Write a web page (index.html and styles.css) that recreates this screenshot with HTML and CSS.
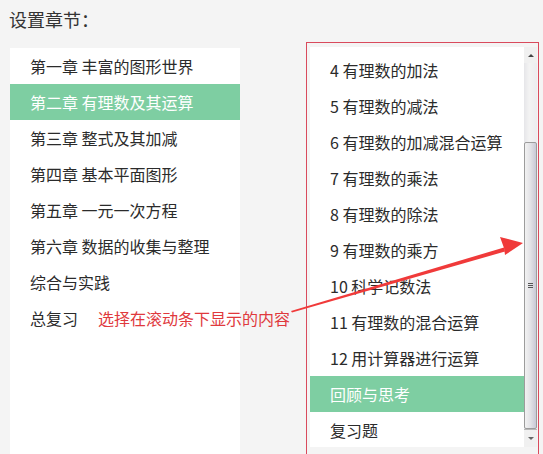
FILE: index.html
```html
<!DOCTYPE html>
<html lang="zh">
<head>
<meta charset="utf-8">
<link rel="stylesheet" href="styles.css">
</head>
<body>
<div class="page">
  <div class="title">设置章节：</div>
  <div class="main">
    <ul class="chapters">
      <li>第一章 丰富的图形世界</li>
      <li class="active">第二章 有理数及其运算</li>
      <li>第三章 整式及其加减</li>
      <li>第四章 基本平面图形</li>
      <li>第五章 一元一次方程</li>
      <li>第六章 数据的收集与整理</li>
      <li>综合与实践</li>
      <li>总复习</li>
    </ul>
    <div class="frame">
      <div class="listbox">
        <ul class="sections">
          <li>4 有理数的加法</li>
          <li>5 有理数的减法</li>
          <li>6 有理数的加减混合运算</li>
          <li>7 有理数的乘法</li>
          <li>8 有理数的除法</li>
          <li>9 有理数的乘方</li>
          <li>10 科学记数法</li>
          <li>11 有理数的混合运算</li>
          <li>12 用计算器进行运算</li>
          <li class="active">回顾与思考</li>
          <li>复习题</li>
        </ul>
        <div class="scrollbar">
          <div class="sb-btn sb-up"><span class="tri-up"></span></div>
          <div class="sb-track">
            <div class="sb-thumb"><span class="grip"></span></div>
          </div>
          <div class="sb-btn sb-down"><span class="tri-down"></span></div>
        </div>
      </div>
    </div>
  </div>
  <div class="note">选择在滚动条下显示的内容</div>
  <svg class="arrow" width="543" height="454" viewBox="0 0 543 454">
    <polygon points="291,311 504,247.5 505,251.5 292,312.5" fill="#f03a3a"/>
    <polygon points="523,243 500,237 504,248 505,255" fill="#f03a3a"/>
  </svg>
</div>
</body>
</html>
```
FILE: styles.css
```css
html, body {
  margin: 0;
  padding: 0;
  background: #f4f4f4;
  overflow: hidden;
}
body {
  font-family: "Noto Sans CJK SC", "Noto Sans", sans-serif;
  color: #2b2b2b;
}
.page {
  position: relative;
  width: 543px;
  height: 454px;
  overflow: hidden;
}
.title {
  font-size: 18px;
  line-height: 22px;
  padding: 8px 0 0 9px;
  height: 40px;
  box-sizing: border-box;
  color: #333;
}
.main {
  display: flex;
  align-items: flex-start;
}
ul {
  list-style: none;
  margin: 0;
  padding: 0;
}
.chapters {
  margin: 8px 0 0 10px;
  width: 230px;
  height: 420px;
  background: #fff;
}
.chapters li,
.sections li {
  height: 36px;
  line-height: 36px;
  font-size: 16px;
  padding-left: 20px;
  white-space: nowrap;
}
.active {
  background: #7ecea2;
  color: #fff;
}
.frame {
  margin: 2px 0 0 66px;
  width: 233px;
  height: 430px;
  border: 1px solid #d94a5c;
  border-bottom: none;
  box-sizing: border-box;
  padding: 4px 1px 0 3px;
}
.listbox {
  display: flex;
  height: 400px;
  background: #fff;
  overflow: hidden;
}
.sections {
  width: 214px;
  padding-top: 5px;
  flex: none;
}
.scrollbar {
  width: 13px;
  flex: none;
  display: flex;
  flex-direction: column;
  background: linear-gradient(to right, #e6e6e9, #f3f3f3 40%, #ececef);
}
.sb-btn {
  height: 16px;
  display: flex;
  align-items: center;
  justify-content: center;
  background: #f0f0f0;
}
.sb-down {
  height: 17px;
  border-top: 1px solid #b8b8b8;
}
.tri-up {
  width: 0;
  height: 0;
  border-left: 3px solid transparent;
  border-right: 3px solid transparent;
  border-bottom: 3px solid #444;
}
.tri-down {
  width: 0;
  height: 0;
  border-left: 3px solid transparent;
  border-right: 3px solid transparent;
  border-top: 3px solid #666;
}
.sb-track {
  flex: 1;
  display: flex;
  flex-direction: column;
  justify-content: flex-end;
}
.sb-thumb {
  height: 287px;
  box-sizing: border-box;
  border: 1px solid #9c9c9c;
  border-radius: 2px;
  background: linear-gradient(to right, #f2f2f2, #e2e2e6 50%, #c9c9d6);
  display: flex;
  align-items: center;
  justify-content: center;
}
.grip {
  width: 5px;
  height: 5px;
  background: repeating-linear-gradient(to bottom, #555 0 1px, transparent 1px 2px);
  margin-top: 0;
}
.note {
  position: absolute;
  left: 98px;
  top: 306px;
  font-size: 16px;
  line-height: 24px;
  color: #e0393d;
  white-space: nowrap;
}
.arrow {
  position: absolute;
  left: 0;
  top: 0;
}
```
